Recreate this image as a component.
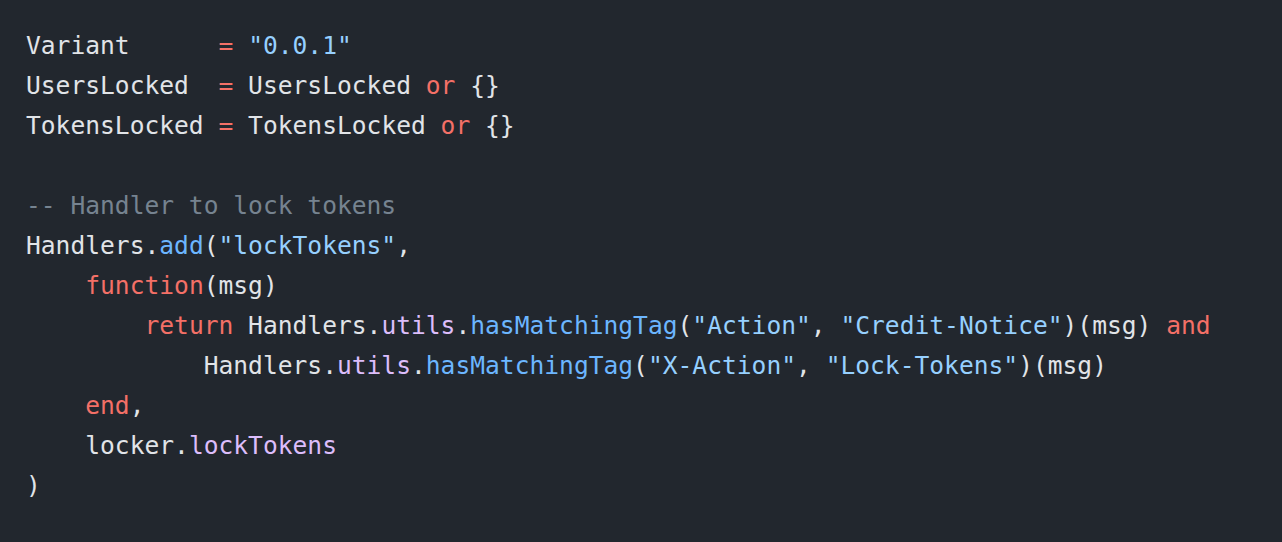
import React from "react";

const C = {
  kw: "text-[#f47067]",
  str: "text-[#96d0ff]",
  fn: "text-[#6cb6ff]",
  prop: "text-[#dcbdfb]",
  cm: "text-[#768390]",
};

const lines = [
  [["Variant      "], ["=", C.kw], [" "], ['"0.0.1"', C.str]],
  [["UsersLocked  "], ["=", C.kw], [" UsersLocked "], ["or", C.kw], [" {}"]],
  [["TokensLocked "], ["=", C.kw], [" TokensLocked "], ["or", C.kw], [" {}"]],
  [[""]],
  [["-- Handler to lock tokens", C.cm]],
  [["Handlers."], ["add", C.fn], ["("], ['"lockTokens"', C.str], [","]],
  [["    "], ["function", C.kw], ["(msg)"]],
  [
    ["        "],
    ["return", C.kw],
    [" Handlers."],
    ["utils", C.prop],
    ["."],
    ["hasMatchingTag", C.fn],
    ["("],
    ['"Action"', C.str],
    [", "],
    ['"Credit-Notice"', C.str],
    [")(msg) "],
    ["and", C.kw],
  ],
  [
    ["            Handlers."],
    ["utils", C.prop],
    ["."],
    ["hasMatchingTag", C.fn],
    ["("],
    ['"X-Action"', C.str],
    [", "],
    ['"Lock-Tokens"', C.str],
    [")(msg)"],
  ],
  [["    "], ["end", C.kw], [","]],
  [["    locker."], ["lockTokens", C.prop]],
  [[")"]],
];

export default function App() {
  return (
    <div className="w-full h-[542px] bg-[#22272e] overflow-hidden">
      <pre className="pt-[26px] pl-[26px] font-['DejaVu_Sans_Mono',monospace] text-[24.6px] leading-[40px] text-[#e1e4e8] whitespace-pre">
        {lines.map((line, i) => (
          <div key={i} className="h-[40px]">
            {line.map(([t, cls], j) => (
              <span key={j} className={cls}>
                {t}
              </span>
            ))}
          </div>
        ))}
      </pre>
    </div>
  );
}
